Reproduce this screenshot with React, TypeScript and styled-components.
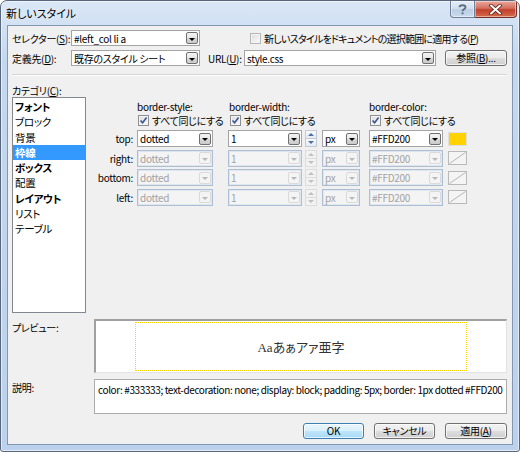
import React from "react";
import styled, { createGlobalStyle } from "styled-components";

const GlobalStyle = createGlobalStyle`
    html, body {
        margin: 0;
        padding: 0;
        background: #ffffff;
    }
    body {
        font-family: "Noto Sans CJK JP", "Noto Sans", sans-serif;
        font-size: 10px;
        letter-spacing: -0.3px;
        color: #000000;
        font-feature-settings: "palt";
    }
    * {
        box-sizing: border-box;
    }
`

const Window = styled.div`
    width: 520px;
    height: 452px;
    display: flex;
    flex-direction: column;
    padding: 0 6px 6px 6px;
    border: 1px solid #59677c;
    border-radius: 7px 7px 3px 3px;
    background: linear-gradient(#dae7f6, #c4d8ef 60px, #bcd1eb);
    box-shadow: inset 0 0 0 1px rgba(255, 255, 255, 0.55);
    overflow: hidden;
`

const TitleBar = styled.div`
    height: 24px;
    margin: 0 -6px;
    padding: 0 2px 0 5px;
    display: flex;
    align-items: flex-start;
`

const TitleText = styled.span`
    align-self: center;
    font-size: 11px;
    letter-spacing: 0;
    color: #000000;
    text-shadow: 0 0 6px #ffffff;
    flex: 1;
`

const CaptionButton = styled.div<{ $w: number, $close?: boolean }>`
    width: ${({ $w }) => $w}px;
    height: 17px;
    display: flex;
    align-items: center;
    justify-content: center;
    border: 1px solid ${({ $close }) => $close ? "#7a2e28" : "#6f7f95"};
    border-top: none;
    border-left: ${({ $close }) => $close ? "none" : "1px solid #6f7f95"};
    border-radius: ${({ $close }) => $close ? "0 0 4px 0" : "0 0 0 4px"};
    background: ${({ $close }) => $close
        ? "linear-gradient(#e9a99b, #d4705f 45%, #c2402c 55%, #d56a4c)"
        : "linear-gradient(#e6eef8, #d3e0ef 45%, #bccde3 55%, #cbdcee)"};
    box-shadow: inset 0 0 0 1px rgba(255, 255, 255, 0.45);
`

const Client = styled.div`
    flex: 1;
    display: flex;
    flex-direction: column;
    padding: 4px 5px 0 4px;
    background: #f0f0f0;
    border: 1px solid #8297b1;
`

const FormRow = styled.div<{ $mt?: number }>`
    height: 16px;
    margin-top: ${({ $mt }) => $mt ?? 0}px;
    display: flex;
    align-items: center;
`

const Label = styled.span<{ $w?: number, $ml?: number }>`
    width: ${({ $w }) => $w ? `${$w}px` : "auto"};
    margin-left: ${({ $ml }) => $ml ?? 0}px;
    white-space: nowrap;
    flex-shrink: 0;
`

const ComboBox = styled.div<{ $w: number, $ml?: number, $disabled?: boolean }>`
    width: ${({ $w }) => $w}px;
    height: 100%;
    margin-left: ${({ $ml }) => $ml ?? 0}px;
    flex-shrink: 0;
    display: flex;
    align-items: center;
    padding: 0 1px 0 2px;
    border: 1px solid ${({ $disabled }) => $disabled ? "#aebfd3" : "#a4a4a4"};
    box-shadow: ${({ $disabled }) => $disabled ? "inset 0 0 0 1px #dfe6ee" : "none"};
    background: ${({ $disabled }) => $disabled ? "#f4f4f4" : "#ffffff"};
    color: ${({ $disabled }) => $disabled ? "#a3a3a3" : "#000000"};
`

const ComboValue = styled.span`
    flex: 1;
    overflow: hidden;
    white-space: nowrap;
`

const DropButton = styled.div<{ $disabled?: boolean }>`
    width: 12px;
    height: 12px;
    display: flex;
    align-items: center;
    justify-content: center;
    padding-top: 2px;
    border: 1px solid ${({ $disabled }) => $disabled ? "#dadada" : "#707070"};
    border-radius: 2px;
    background: ${({ $disabled }) => $disabled
        ? "#f4f4f4"
        : "linear-gradient(#f4f4f4, #e6e6e6 50%, #d6d6d6 51%, #cbcbcb)"};
    &::after {
        content: "";
        border-left: 3px solid transparent;
        border-right: 3px solid transparent;
        border-top: 3px solid ${({ $disabled }) => $disabled ? "#b8b8b8" : "#000000"};
    }
`

const CheckGroup = styled.label<{ $w?: number, $ml?: number, $tight?: boolean }>`
    width: ${({ $w }) => $w ? `${$w}px` : "auto"};
    margin-left: ${({ $ml }) => $ml ?? 0}px;
    display: flex;
    align-items: center;
    gap: 3px;
    white-space: nowrap;
    flex-shrink: 0;
    letter-spacing: ${({ $tight }) => $tight ? "-0.75px" : "inherit"};
`

const CheckBox = styled.span<{ $faded?: boolean }>`
    width: 11px;
    height: 11px;
    display: inline-flex;
    align-items: center;
    justify-content: center;
    border: 1px solid ${({ $faded }) => $faded ? "#b6b6b6" : "#8e8f8f"};
    background: linear-gradient(135deg, #dcdcdc, #fbfbfb);
    box-shadow: inset 0 0 0 1px #f4f4f4;
`

const Separator = styled.div`
    height: 2px;
    margin-top: 8px;
    border-top: 1px solid #d5d5d5;
    border-bottom: 1px solid #ffffff;
`

const Middle = styled.div`
    height: 229px;
    margin-top: 8px;
    display: flex;
`

const CategoryColumn = styled.div`
    width: 74px;
    display: flex;
    flex-direction: column;
`

const CategoryLabel = styled.span`
    height: 13px;
    line-height: 13px;
`

const ListBox = styled.ul`
    height: 216px;
    margin: 0;
    padding: 1px 0 0 0;
    list-style: none;
    background: #ffffff;
    border: 1px solid #828790;
`

const ListItem = styled.li<{ $bold?: boolean, $selected?: boolean }>`
    height: 15.3px;
    line-height: 15.3px;
    padding-left: 2px;
    font-size: 10.5px;
    font-weight: ${({ $bold }) => $bold ? 700 : 400};
    background: ${({ $selected }) => $selected ? "#3399ff" : "transparent"};
    color: ${({ $selected }) => $selected ? "#ffffff" : "#000000"};
    white-space: nowrap;
`

const BorderPanel = styled.div`
    flex: 1;
    display: flex;
    flex-direction: column;
    padding-top: 16px;
`

const PanelRow = styled.div<{ $h: number, $mt?: number }>`
    height: ${({ $h }) => $h}px;
    margin-top: ${({ $mt }) => $mt ?? 0}px;
    display: flex;
    align-items: center;
`

const HeaderCell = styled.span<{ $w: number, $ml?: number }>`
    width: ${({ $w }) => $w}px;
    margin-left: ${({ $ml }) => $ml ?? 0}px;
    flex-shrink: 0;
    white-space: nowrap;
`

const RowLabel = styled.span`
    width: 47px;
    text-align: right;
    flex-shrink: 0;
`

const Spinner = styled.div<{ $ml: number }>`
    width: 12px;
    height: 100%;
    margin-left: ${({ $ml }) => $ml}px;
    display: flex;
    flex-direction: column;
    flex-shrink: 0;
`

const SpinHalf = styled.div<{ $disabled?: boolean, $down?: boolean }>`
    flex: 1;
    display: flex;
    align-items: center;
    justify-content: center;
    border: 1px solid ${({ $disabled }) => $disabled ? "#dcdcdc" : "#c3cad4"};
    border-top: ${({ $down, $disabled }) => $down ? "none" : `1px solid ${$disabled ? "#dcdcdc" : "#c3cad4"}`};
    background: ${({ $disabled }) => $disabled ? "#f2f2f2" : "linear-gradient(#f7f9fc, #e5ebf3)"};
    &::after {
        content: "";
        border-left: 3px solid transparent;
        border-right: 3px solid transparent;
        ${({ $down, $disabled }) => $down
            ? `border-top: 3px solid ${$disabled ? "#c0c0c0" : "#4e6ea8"};`
            : `border-bottom: 3px solid ${$disabled ? "#c0c0c0" : "#4e6ea8"};`}
    }
`

const Swatch = styled.div<{ $color?: string }>`
    width: 19px;
    height: 14px;
    margin-left: 5px;
    flex-shrink: 0;
    border: 1px solid ${({ $color }) => $color ? "#e0e0e0" : "#b9b9b9"};
    background: ${({ $color }) => $color ?? "#f4f4f4"};
    display: flex;
`

const SectionRow = styled.div<{ $mt: number }>`
    margin-top: ${({ $mt }) => $mt}px;
    display: flex;
`

const SideLabel = styled.span`
    width: 82px;
    flex-shrink: 0;
    padding-top: 1px;
`

const PreviewBox = styled.div`
    width: 413px;
    height: 54px;
    display: flex;
    align-items: center;
    justify-content: center;
    background: #ffffff;
    border-top: 2px solid #a0a0a0;
    border-left: 2px solid #a0a0a0;
    border-right: 1px solid #e3e3e3;
    border-bottom: 1px solid #e3e3e3;
`

const PreviewSample = styled.div`
    width: 332px;
    height: 49px;
    display: flex;
    align-items: center;
    justify-content: center;
    border: 1px dotted #ffd200;
    color: #333333;
    font-family: "Liberation Serif", "Noto Sans CJK JP", serif;
    font-size: 13px;
    letter-spacing: 0;
`

const DescriptionBox = styled.div`
    width: 413px;
    height: 35px;
    padding: 2px 3px;
    background: #ffffff;
    border: 1px solid #acacac;
    white-space: nowrap;
    overflow: hidden;
    letter-spacing: -0.39px;
`

const ButtonRow = styled.div`
    height: 16px;
    margin-top: 9px;
    display: flex;
    justify-content: flex-end;
    gap: 10px;
`

const PushButton = styled.button<{ $w: number, $default?: boolean, $ml?: number }>`
    width: ${({ $w }) => $w}px;
    height: 16px;
    margin-left: ${({ $ml }) => $ml ?? 0}px;
    padding: 0;
    flex-shrink: 0;
    font: inherit;
    letter-spacing: inherit;
    font-feature-settings: "palt";
    line-height: 14px;
    color: #000000;
    border: 1px solid ${({ $default }) => $default ? "#3c7fb1" : "#707070"};
    border-radius: 3px;
    background: ${({ $default }) => $default
        ? "linear-gradient(#eaf6fd, #d9f0fc 50%, #bee6fd 51%, #a7d9f5)"
        : "linear-gradient(#f2f2f2, #ebebeb 50%, #dddddd 51%, #cfcfcf)"};
    box-shadow: inset 0 0 0 1px rgba(255, 255, 255, 0.7);
`

type ComboProps = {
    value: string
    w: number
    ml?: number
    disabled?: boolean
}

const Combo = ({ value, w, ml, disabled }: ComboProps) => (
    <ComboBox $w={w} $ml={ml} $disabled={disabled}>
        <ComboValue>{value}</ComboValue>
        <DropButton $disabled={disabled} />
    </ComboBox>
)

const Check = ({ checked, faded }: { checked?: boolean, faded?: boolean }) => (
    <CheckBox $faded={faded}>
        {checked && (
            <svg width="9" height="9" viewBox="0 0 9 9">
                <path d="M1.5 4.5 L3.6 6.8 L7.6 1.6" fill="none" stroke="#3a5396" strokeWidth="1.6" />
            </svg>
        )}
    </CheckBox>
)

const categories = [
    { name: "フォント", bold: true },
    { name: "ブロック" },
    { name: "背景" },
    { name: "枠線", bold: true, selected: true },
    { name: "ボックス", bold: true },
    { name: "配置" },
    { name: "レイアウト", bold: true },
    { name: "リスト" },
    { name: "テーブル" },
]

const sides = ["top", "right", "bottom", "left"]

const App = () => {
    return (
        <>
            <GlobalStyle />
            <Window>
                <TitleBar>
                    <TitleText>新しいスタイル</TitleText>
                    <CaptionButton $w={25}>
                        <svg width="9" height="11" viewBox="0 0 9 11">
                            <path d="M1.5 3.2 C1.5 0.6 7.5 0.6 7.5 3.2 C7.5 5.2 4.5 5.2 4.5 7.2" fill="none" stroke="#5b6c84" strokeWidth="1.8" />
                            <rect x="3.6" y="8.4" width="1.9" height="1.9" fill="#5b6c84" />
                        </svg>
                    </CaptionButton>
                    <CaptionButton $w={42} $close>
                        <svg width="13" height="11" viewBox="0 0 13 11">
                            <path d="M2 1.5 L11 9.5 M11 1.5 L2 9.5" stroke="#5a1a12" strokeWidth="3.6" strokeLinecap="round" />
                            <path d="M2 1.5 L11 9.5 M11 1.5 L2 9.5" stroke="#ffffff" strokeWidth="2" strokeLinecap="round" />
                        </svg>
                    </CaptionButton>
                </TitleBar>
                <Client>
                    <FormRow>
                        <Label $w={59}>セレクター(<u>S</u>):</Label>
                        <Combo value="#left_col li a" w={129} />
                        <CheckGroup $ml={50} $tight>
                            <Check faded />
                            <span>新しいスタイルをドキュメントの選択範囲に適用する(<u>P</u>)</span>
                        </CheckGroup>
                    </FormRow>
                    <FormRow $mt={4}>
                        <Label $w={59}>定義先(<u>D</u>):</Label>
                        <Combo value="既存のスタイル シート" w={129} />
                        <Label $w={36} $ml={8}>URL(<u>U</u>):</Label>
                        <Combo value="style.css" w={192} />
                        <PushButton $w={62} $ml={9}>参照(<u>B</u>)...</PushButton>
                    </FormRow>
                    <Separator />
                    <Middle>
                        <CategoryColumn>
                            <CategoryLabel>カテゴリ(<u>C</u>):</CategoryLabel>
                            <ListBox>
                                {categories.map(item => (
                                    <ListItem key={item.name} $bold={item.bold} $selected={item.selected}>
                                        {item.name}
                                    </ListItem>
                                ))}
                            </ListBox>
                        </CategoryColumn>
                        <BorderPanel>
                            <PanelRow $h={12}>
                                <HeaderCell $w={92} $ml={51}>border-style:</HeaderCell>
                                <HeaderCell $w={140}>border-width:</HeaderCell>
                                <HeaderCell $w={90}>border-color:</HeaderCell>
                            </PanelRow>
                            <PanelRow $h={14} $mt={1}>
                                <CheckGroup $w={92} $ml={52}><Check checked />すべて同じにする</CheckGroup>
                                <CheckGroup $w={140}><Check checked />すべて同じにする</CheckGroup>
                                <CheckGroup><Check checked />すべて同じにする</CheckGroup>
                            </PanelRow>
                            {sides.map((side, index) => {
                                const disabled = index > 0
                                return (
                                    <PanelRow key={side} $h={17} $mt={index === 0 ? 3 : 2.6}>
                                        <RowLabel>{side}:</RowLabel>
                                        <Combo value="dotted" w={76} ml={4} disabled={disabled} />
                                        <Combo value="1" w={74} ml={15} disabled={disabled} />
                                        <Spinner $ml={3}>
                                            <SpinHalf $disabled={disabled} />
                                            <SpinHalf $disabled={disabled} $down />
                                        </Spinner>
                                        <Combo value="px" w={38} ml={5} disabled={disabled} />
                                        <Combo value="#FFD200" w={74} ml={9} disabled={disabled} />
                                        {disabled ? (
                                            <Swatch>
                                                <svg width="17" height="12" viewBox="0 0 17 12">
                                                    <path d="M0.5 11.5 L16.5 0.5" stroke="#b5b5b5" strokeWidth="1" />
                                                </svg>
                                            </Swatch>
                                        ) : (
                                            <Swatch $color="#ffd200" />
                                        )}
                                    </PanelRow>
                                )
                            })}
                        </BorderPanel>
                    </Middle>
                    <SectionRow $mt={6}>
                        <SideLabel>プレビュー:</SideLabel>
                        <PreviewBox>
                            <PreviewSample>Aaあぁアァ亜字</PreviewSample>
                        </PreviewBox>
                    </SectionRow>
                    <SectionRow $mt={6}>
                        <SideLabel>説明:</SideLabel>
                        <DescriptionBox>
                            color: #333333; text-decoration: none; display: block; padding: 5px; border: 1px dotted #FFD200
                        </DescriptionBox>
                    </SectionRow>
                    <ButtonRow>
                        <PushButton $w={61} $default>OK</PushButton>
                        <PushButton $w={61}>キャンセル</PushButton>
                        <PushButton $w={62}>適用(<u>A</u>)</PushButton>
                    </ButtonRow>
                </Client>
            </Window>
        </>
    )
}

export default App
